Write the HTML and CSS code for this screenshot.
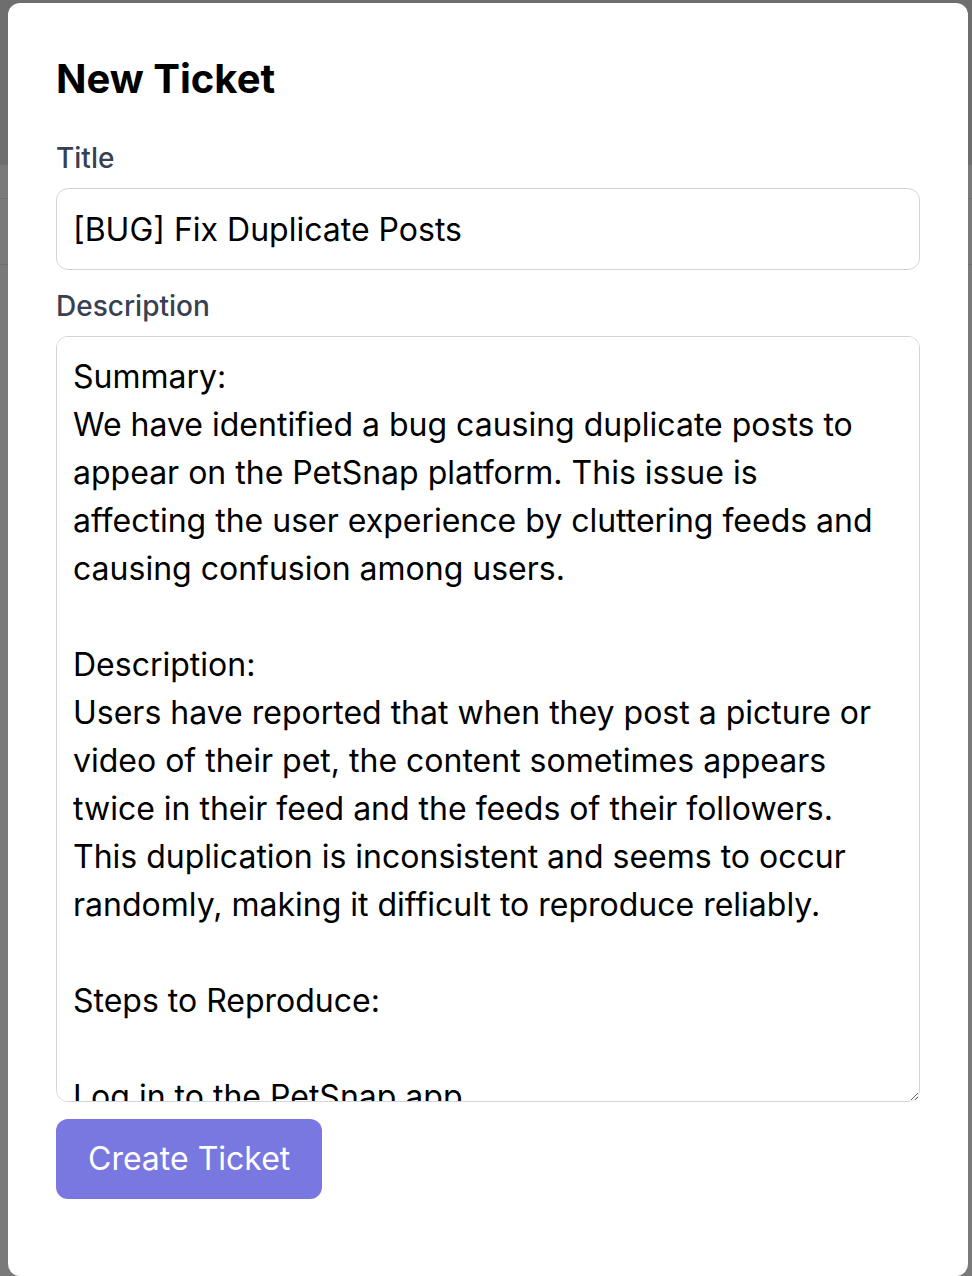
FILE: index.html
```html
<!DOCTYPE html>
<html lang="en">
<head>
<meta charset="utf-8">
<title>New Ticket</title>
<link rel="stylesheet" href="styles.css">
</head>
<body>
<div class="app">
  <div class="app-header"></div>
  <div class="app-row app-row-short"></div>
  <div class="app-row app-row-tall"></div>
</div>
<div class="overlay">
  <div class="modal">
    <h2 class="modal-title">New Ticket</h2>
    <form class="ticket-form">
      <div class="field">
        <label class="field-label" for="title">Title</label>
        <input class="field-input" id="title" type="text" value="[BUG] Fix Duplicate Posts">
      </div>
      <div class="field">
        <label class="field-label" for="desc">Description</label>
        <textarea class="field-textarea" id="desc">Summary:
We have identified a bug causing duplicate posts to appear on the PetSnap platform. This issue is affecting the user experience by cluttering feeds and causing confusion among users.

Description:
Users have reported that when they post a picture or video of their pet, the content sometimes appears twice in their feed and the feeds of their followers. This duplication is inconsistent and seems to occur randomly, making it difficult to reproduce reliably.

Steps to Reproduce:

Log in to the PetSnap app.
Navigate to the "Create Post" section.
Upload a picture or video of a pet.
Add a caption and submit the post.
Check the feed for duplicate entries.</textarea>
      </div>
      <div class="actions">
        <button class="btn-primary" type="button">Create Ticket</button>
      </div>
    </form>
  </div>
</div>
</body>
</html>
```

FILE: styles.css
```css
* {
  box-sizing: border-box;
}

html, body {
  margin: 0;
  padding: 0;
  height: 100%;
}

body {
  background: #7a7a7a;
  font-family: Inter, "Noto Sans", sans-serif;
  overflow: hidden;
}

.app-header {
  height: 165px;
  background: #6e6e6f;
}

.app-row {
  border-bottom: 1px solid #6f6f6f;
}

.app-row-short {
  height: 34px;
}

.app-row-tall {
  height: 66px;
}

.overlay {
  position: fixed;
  inset: 0;
  display: flex;
  justify-content: flex-start;
  align-items: flex-start;
  padding: 3px 0 0 8px;
}

.modal {
  width: 960px;
  height: 1273px;
  background: #ffffff;
  border-radius: 12px;
  padding: 48px;
}

.modal-title {
  margin: 0;
  font-size: 40px;
  line-height: 56px;
  font-weight: 700;
  color: #000000;
}

.ticket-form {
  display: flex;
  flex-direction: column;
  margin-top: 31px;
}

.field {
  display: flex;
  flex-direction: column;
  gap: 10px;
}

.field + .field {
  margin-top: 16px;
}

.field-label {
  font-size: 28px;
  line-height: 40px;
  font-weight: 500;
  color: #374151;
}

.field-input,
.field-textarea {
  width: 100%;
  font-family: inherit;
  font-size: 32px;
  line-height: 48px;
  color: #000000;
  background: #ffffff;
  border: 1px solid #d1d5db;
  border-radius: 12px;
  padding: 16px;
  margin: 0;
  outline: none;
}

.field-input {
  height: 82px;
}

.field-textarea {
  height: 766px;
  padding-right: 32px;
  resize: vertical;
  display: block;
  scrollbar-width: none;
}

.field-textarea::-webkit-scrollbar {
  display: none;
}

.actions {
  margin-top: 17px;
  display: flex;
}

.btn-primary {
  font-family: inherit;
  font-size: 32px;
  line-height: 48px;
  color: #ffffff;
  background: #7978e1;
  border: none;
  border-radius: 12px;
  padding: 16px 32px;
}
```
